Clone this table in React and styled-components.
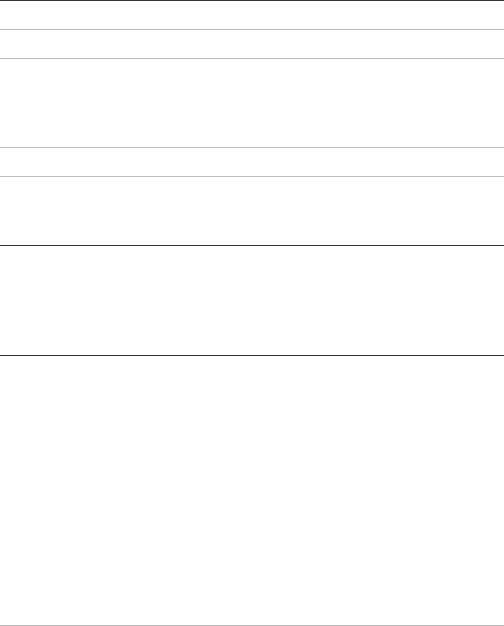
import React from 'react';
import styled, { createGlobalStyle } from 'styled-components'

const GlobalStyle = createGlobalStyle`
  html, body {
    margin: 0;
    padding: 0;
    background-color: #ffffff;
    font-family: "Liberation Sans", Arial, sans-serif;
  }
`

const Pagina = styled.div`
  display: flex;
  flex-direction: column;
  width: 504px;
  border-top: 1px solid #333333;
`

const Secao = styled.div`
  height: ${props => props.altura}px;
  border-bottom: 1px solid ${props => props.escura ? '#333333' : '#bbbbbb'};
`

const secoes = [
  { altura: 28 },
  { altura: 28 },
  { altura: 88 },
  { altura: 28 },
  { altura: 68, escura: true },
  { altura: 109, escura: true },
  { altura: 269 }
]

function App() {
  return (
    <>
      <GlobalStyle />
      <Pagina>
        {secoes.map((secao, index) => (
          <Secao key={index} altura={secao.altura} escura={secao.escura} />
        ))}
      </Pagina>
    </>
  )
}

export default App;
